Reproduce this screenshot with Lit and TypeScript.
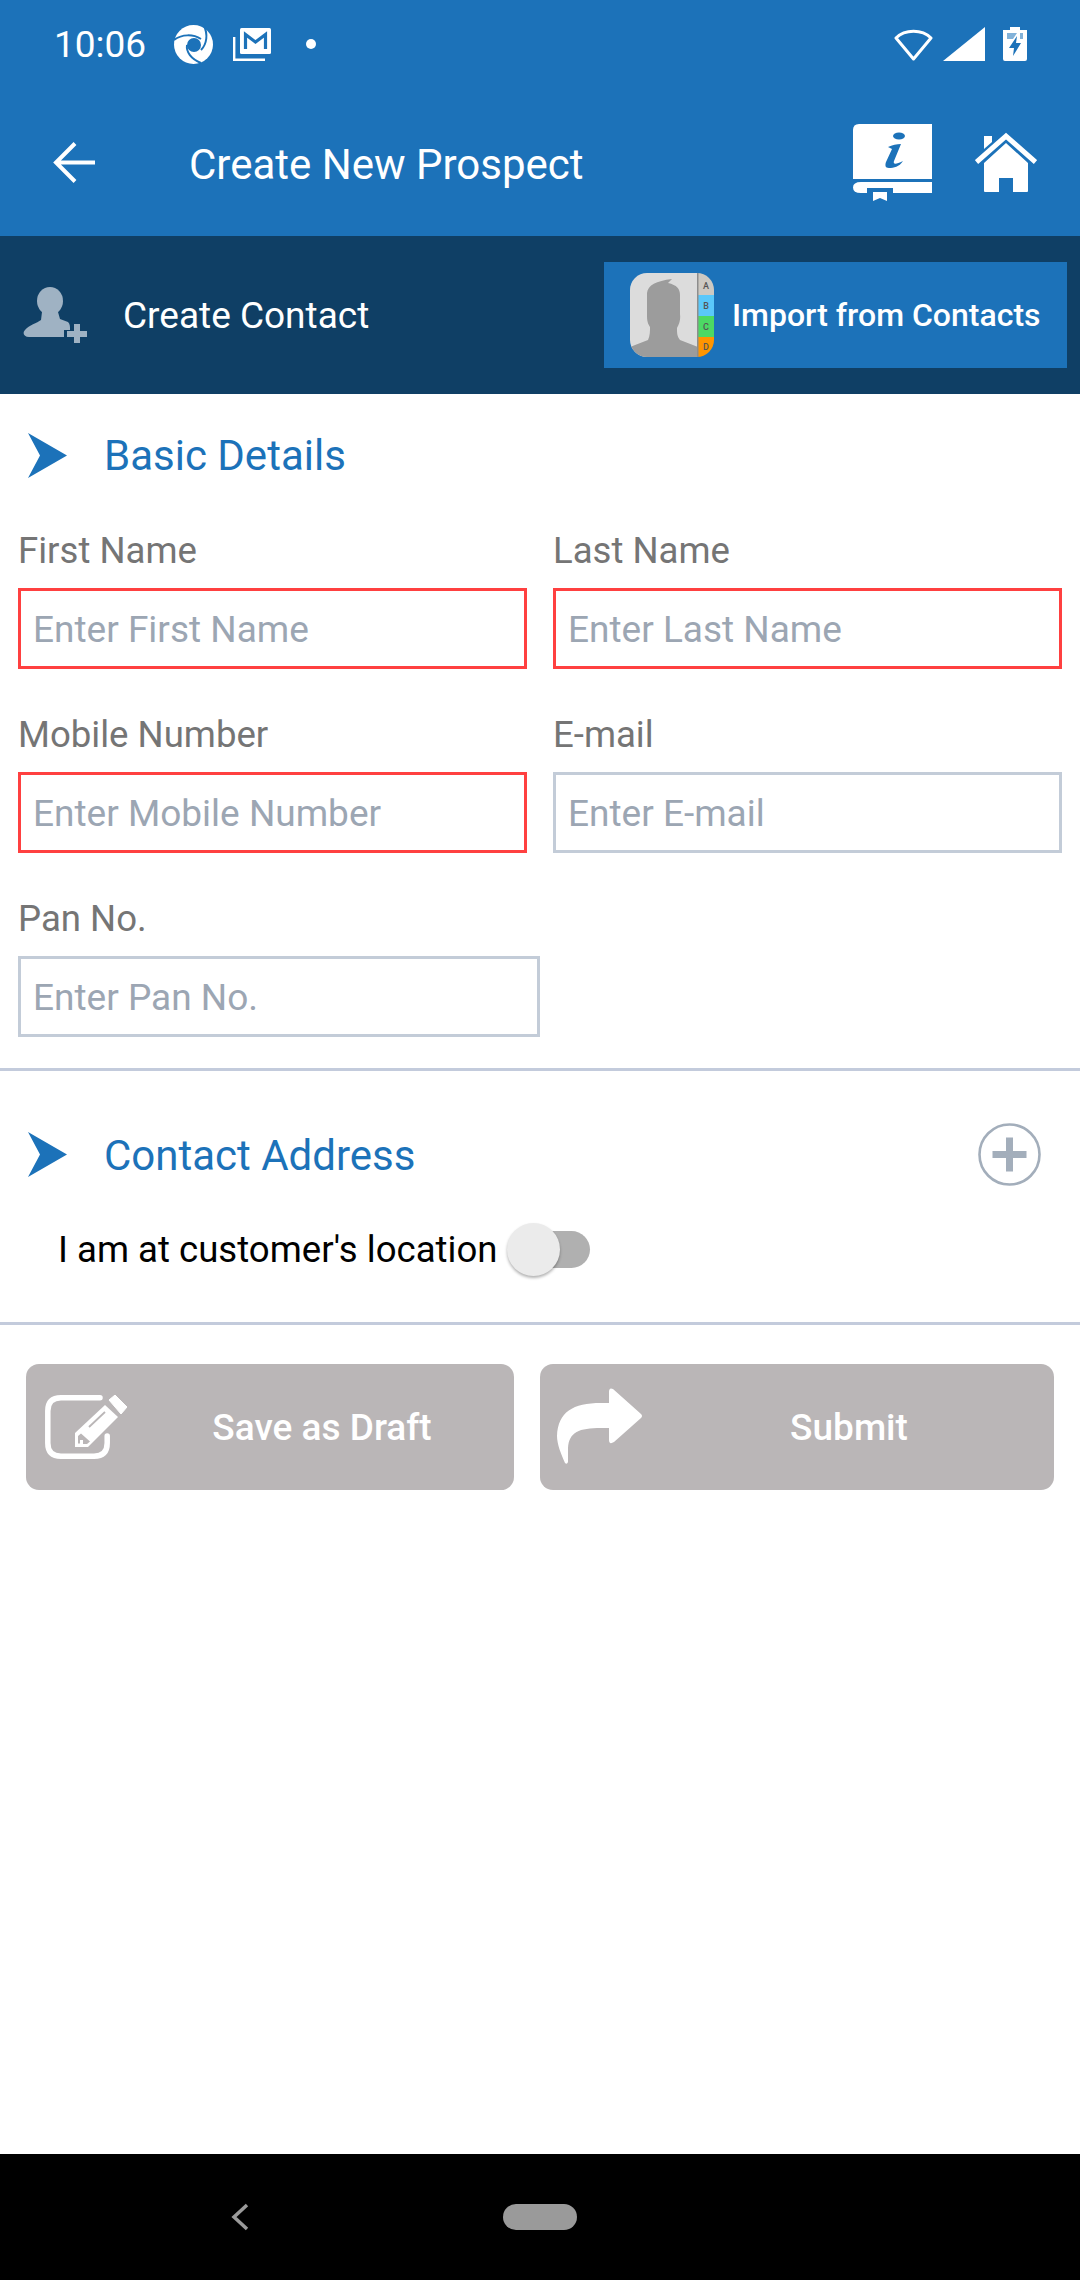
import { LitElement, html, css } from 'lit';
import { customElement } from 'lit/decorators.js';

const BLUE = '#1c72b9';

const chevron = html`<svg class="chev" viewBox="0 0 39 45"><path d="M0 0 L39 22.500 L0 45 L12 22.500 Z" fill="${BLUE}"/></svg>`;

@customElement('app-root')
class AppRoot extends LitElement {
  static styles = css`
    :host {
      display: flex;
      flex-direction: column;
      width: 1080px;
      height: 2280px;
      background: #fff;
      font-family: Roboto, "Liberation Sans", sans-serif;
      overflow: hidden;
    }
    svg { display: block; flex: none; }
    .top {
      background: #1c72b9;
      height: 236px;
      flex: none;
      color: #fff;
      display: flex;
      flex-direction: column;
    }
    .status {
      height: 88px;
      flex: none;
      padding: 0 53px 0 54px;
      display: flex;
      align-items: center;
      font-size: 37px;
    }
    .status .time { width: 120px; }
    .status .mail { margin-left: 20px; }
    .status .dot { margin-left: 35px; }
    .status .signal { margin-left: 10px; }
    .status .batt { margin-left: 18px; }
    .spacer { flex: 1; }
    .appbar {
      flex: 1;
      display: flex;
      align-items: center;
      padding: 0 43px 0 53px;
      font-size: 42px;
    }
    .appbar .title { margin-left: 94px; padding-top: 4px; }
    .appbar .home { margin-left: 43px; }
    .subbar {
      background: #0f3f65;
      height: 158px;
      flex: none;
      display: flex;
      align-items: center;
      padding: 0 13px 0 23px;
      color: #fff;
    }
    .subbar .label { font-size: 37px; margin-left: 36px; flex: 1; }
    .import {
      width: 463px;
      height: 106px;
      background: #1c72b9;
      display: flex;
      align-items: center;
      padding-left: 26px;
      box-sizing: border-box;
      font-size: 32px;
      font-weight: 500;
      gap: 18px;
    }
    .section {
      display: flex;
      align-items: center;
      color: #1c72b9;
      font-size: 42px;
      padding-left: 28px;
    }
    .section .chev { width: 39px; height: 45px; margin-right: 37px; flex: none; }
    .basic { height: 124px; flex: none; box-sizing: border-box; padding-bottom: 2px; }
    .fields {
      display: grid;
      grid-template-columns: 509px 509px;
      column-gap: 26px;
      padding: 0 18px;
      row-gap: 33px;
    }
    .field label {
      display: block;
      color: #757575;
      font-size: 36.600px;
      height: 70px;
      line-height: 66px;
    }
    .field .box {
      height: 81px;
      box-sizing: border-box;
      border: 3px solid #c3ccd8;
      display: flex;
      align-items: center;
      padding: 2px 0 0 12px;
      color: #9ca6b3;
      font-size: 37px;
    }
    .field .box.req { border-color: #ff4040; }
    .field.wide { width: 522px; }
    .rule { height: 3px; background: #c3cbdc; flex: none; }
    .rule.first { margin-top: 31px; }
    .contact { height: 100px; margin-top: 33px; flex: none; }
    .contact .name { padding-top: 2px; }
    .contact .plus { margin-left: auto; margin-right: 39px; width: 63px; height: 63px; }
    .loc {
      display: flex;
      align-items: center;
      height: 90px;
      margin-bottom: 28px;
      padding-left: 58px;
      font-size: 36.600px;
      color: #000;
      flex: none;
    }
    .toggle { position: relative; width: 83px; height: 53px; margin-left: 10px; }
    .toggle .track {
      position: absolute;
      left: 25px;
      top: 8px;
      width: 58px;
      height: 37px;
      border-radius: 19px;
      background: #b0b0b0;
    }
    .toggle .thumb {
      position: absolute;
      left: 0;
      top: 0;
      width: 53px;
      height: 53px;
      border-radius: 50%;
      background: #ebebeb;
      box-shadow: 0 2px 3px rgba(0,0,0,0.3);
    }
    .actions {
      display: flex;
      padding: 39px 26px 0 26px;
      gap: 26px;
      flex: none;
    }
    .btn {
      height: 126px;
      background: #bab6b7;
      border-radius: 13px;
      color: #fff;
      font-size: 37px;
      font-weight: 500;
      display: flex;
      align-items: center;
      justify-content: center;
      padding-left: 104px;
      position: relative;
      box-sizing: border-box;
    }
    .btn.draft { width: 488px; }
    .btn.submit { width: 514px; }
    .btn svg { position: absolute; }
    .btn.draft svg { left: 19px; top: 31px; }
    .btn.submit svg { left: 17px; top: 24px; }
    .fill { flex: 1; }
    .nav {
      height: 126px;
      background: #000;
      flex: none;
      position: relative;
    }
    .nav .back { position: absolute; left: 231px; top: 49px; }
    .nav .pill {
      position: absolute;
      left: 503px;
      top: 50px;
      width: 74px;
      height: 26px;
      border-radius: 13px;
      background: #9a9a9a;
    }
  `;

  field(name: string, hint: string, req = false, wide = false) {
    return html`<div class="field ${wide ? 'wide' : ''}">
      <label>${name}</label>
      <div class="box ${req ? 'req' : ''}">${hint}</div>
    </div>`;
  }

  render() {
    return html`
      <div class="top">
        <div class="status">
          <span class="time">10:06</span>
          <svg width="39" height="39" viewBox="0 0 39 39">
            <circle cx="19.500" cy="19.500" r="19.500" fill="#fff"/>
            <circle cx="20" cy="20" r="7" fill="${BLUE}"/>
            <path d="M0 15 C8 9 19 9 27 14" fill="none" stroke="${BLUE}" stroke-width="2"/>
            <path d="M30 1 C34 9 33 19 27 25" fill="none" stroke="${BLUE}" stroke-width="2"/>
            <path d="M13 20 C12 27 17 34 27 38" fill="none" stroke="${BLUE}" stroke-width="2"/>
          </svg>
          <svg class="mail" width="38" height="33" viewBox="0 0 38 33">
            <path d="M1.200 9 V31.800 H32" fill="none" stroke="#fff" stroke-width="2.400"/>
            <rect x="7" y="0" width="31" height="26" rx="1.500" fill="#fff"/>
            <path d="M12.500 21 V6.500 L22.500 14 L32.500 6.500 V21" fill="none" stroke="${BLUE}" stroke-width="3.200"/>
          </svg>
          <svg class="dot" width="10" height="10" viewBox="0 0 10 10"><circle cx="5" cy="5" r="5" fill="#fff"/></svg>
          <div class="spacer"></div>
          <svg width="39" height="33" viewBox="0 0 39 33"><path d="M2 10 C11 1 28 1 37 10 L19.500 31 Z" fill="none" stroke="#fff" stroke-width="3" stroke-linejoin="round"/></svg>
          <svg class="signal" width="42" height="34" viewBox="0 0 42 34"><path d="M42 0 V34 H0 Z" fill="#fff"/></svg>
          <svg class="batt" width="24" height="34" viewBox="0 0 24 34">
            <path d="M7 0 H17 V3 H24 V32 Q24 34 22 34 H2 Q0 34 0 32 V3 H7Z" fill="#fff"/>
            <path d="M4 6 H14 L10 12 H4Z M17 6 H20 V12 H17Z" fill="${BLUE}" opacity=".55"/>
            <path d="M14 9 L6 21 H11 L10 29 L18 16 H13Z" fill="${BLUE}"/>
          </svg>
        </div>
        <div class="appbar">
          <svg width="42" height="41" viewBox="0 0 42 41"><path d="M22 1.500 L3 20.500 L22 39.500 M3 20.500 H42" fill="none" stroke="#fff" stroke-width="4"/></svg>
          <span class="title">Create New Prospect</span>
          <div class="spacer"></div>
          <svg width="79" height="77" viewBox="0 0 79 77">
            <path d="M6 0 H79 V55 H0 V6 Q0 0 6 0Z" fill="#fff"/>
            <path d="M8 58 H79 V69 H40 V64 H14 V69 H8 Q0 69 0 63.500 Q0 58 8 58Z" fill="#fff"/>
            <path d="M20 68 H34 V77 L27 74 L20 77Z" fill="#fff"/>
            <ellipse cx="46" cy="12" rx="6" ry="3.500" fill="${BLUE}"/>
            <path d="M35 23 C39 21 44 20 48 20 L41 37 C40 40 42 41 50 37 C46 43 41 44 36 44 C32 44 32 41 33 38 L39 25 Z" fill="${BLUE}"/>
          </svg>
          <svg class="home" width="62" height="60" viewBox="0 0 62 60">
            <path d="M1.500 30 L31 4 L60.500 30" fill="none" stroke="#fff" stroke-width="5"/>
            <path d="M9 4 H17 V10 L9 17Z" fill="#fff"/>
            <path d="M31 11 L53 31 V59 Q53 60 52 60 H38 V46 H24 V60 H10 Q9 60 9 59 V31Z" fill="#fff"/>
          </svg>
        </div>
      </div>
      <div class="subbar">
        <svg width="64" height="56" viewBox="0 0 64 56">
          <g fill="#9fb2c3">
            <ellipse cx="27" cy="14" rx="13" ry="14"/>
            <path d="M19 25 H35 L37 32 L45 35 C47 37 47 39 47 42 V50 H6 C1 50 -1 46 2 43 C6 38 14 36 18 33Z"/>
          </g>
          <path d="M50 34 H58 V43 H67 V51 H58 V60 H50 V51 H41 V43 H50Z" fill="#0f3f65"/>
          <path d="M51 37 H57 V44 H64 V50 H57 V56 H51 V50 H44 V44 H51Z" fill="#9fb2c3"/>
        </svg>
        <span class="label">Create Contact</span>
        <div class="import">
          <svg width="84" height="84" viewBox="0 0 84 84">
            <defs><clipPath id="c"><rect width="84" height="84" rx="17"/></clipPath></defs>
            <g clip-path="url(#c)">
              <rect width="68" height="84" fill="#dcdcdc"/>
              <path d="M0 84 V74 L18 67 C20 63 20 58 20 54 C19 52 17 50 17 43 V20 C18 12 26 8 42 6 L38 10 C47 12 50 16 50 22 V41 C51 48 48 53 47 55 C47 60 47 63 50 67 L68 74 V84Z" fill="#9c9c9c"/>
              <rect x="67" width="2" height="84" fill="#8d8d8d"/>
              <rect x="68.500" y="0" width="16" height="22" fill="#cdc9c2"/>
              <rect x="68.500" y="22" width="16" height="21" fill="#5ac8fa"/>
              <rect x="68.500" y="43" width="16" height="21" fill="#4cd964"/>
              <rect x="68.500" y="64" width="16" height="20" fill="#ff9500"/>
              <g font-size="9" fill="#555" text-anchor="middle" font-family="Roboto, sans-serif">
                <text x="76" y="16">A</text>
                <text x="76" y="36">B</text>
                <text x="76" y="57">C</text>
                <text x="76" y="77">D</text>
              </g>
            </g>
          </svg>
          <span>Import from Contacts</span>
        </div>
      </div>
      <div class="section basic">${chevron}<span>Basic Details</span></div>
      <div class="fields">
        ${this.field('First Name', 'Enter First Name', true)}
        ${this.field('Last Name', 'Enter Last Name', true)}
        ${this.field('Mobile Number', 'Enter Mobile Number', true)}
        ${this.field('E-mail', 'Enter E-mail')}
        ${this.field('Pan No.', 'Enter Pan No.', false, true)}
      </div>
      <div class="rule first"></div>
      <div class="section contact">${chevron}<span class="name">Contact Address</span>
        <svg class="plus" viewBox="0 0 63 63">
          <circle cx="31.500" cy="31.500" r="30" fill="none" stroke="#a3aebb" stroke-width="2.600"/>
          <path d="M28 14.500 H35 V28 H48.500 V35 H35 V48.500 H28 V35 H14.500 V28 H28Z" fill="#a3aebb"/>
        </svg>
      </div>
      <div class="loc">
        <span>I am at customer's location</span>
        <div class="toggle"><div class="track"></div><div class="thumb"></div></div>
      </div>
      <div class="rule"></div>
      <div class="actions">
        <div class="btn draft">
          <svg width="82" height="64" viewBox="0 0 82 64" fill="none">
            <path d="M55 2.800 H16 Q2.800 2.800 2.800 16 V48 Q2.800 61.200 16 61.200 H49 Q62.200 61.200 62.200 48 V41" stroke="#fff" stroke-width="5.500" stroke-linecap="round"/>
            <path d="M30 38 L60 10 L73 22 L43 52 H30Z" fill="#fff"/>
            <path d="M33 48.500 V41 L36 38.500 L45 46.500 L42 49 H38 V45 H35 V48.500Z" fill="#bab6b7"/>
            <path d="M44 32 L60 17" stroke="#bab6b7" stroke-width="1.800"/>
            <path d="M64 5 L70 0 L82 12 L76 19Z" fill="#fff" stroke="#fff" stroke-width="1" stroke-linejoin="round"/>
          </svg>
          <span>Save as Draft</span>
        </div>
        <div class="btn submit">
          <svg width="85" height="76" viewBox="0 0 85 76">
            <path d="M52 4 Q52 -1 56 1 L84 26 Q86 28 84 30 L57 54 Q52 57 52 52 V40 H44 C22 40 12 44 11 60 V74 Q10 77 8 75 C4 66 0 56 0 48 C1 24 16 15 44 15 H52Z" fill="#fff"/>
          </svg>
          <span>Submit</span>
        </div>
      </div>
      <div class="fill"></div>
      <div class="nav">
        <svg class="back" width="18" height="28" viewBox="0 0 18 28"><path d="M16 2 L3 14 L16 26" fill="none" stroke="#9a9a9a" stroke-width="3.500"/></svg>
        <div class="pill"></div>
      </div>
    `;
  }
}
